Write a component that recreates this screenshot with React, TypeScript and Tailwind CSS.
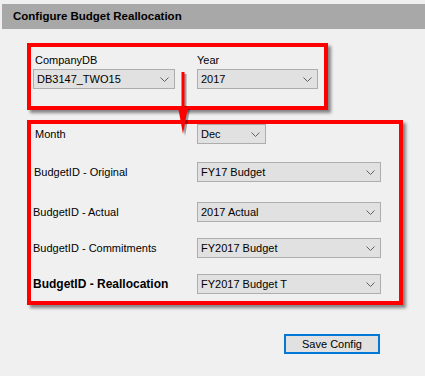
import React from 'react';

const Chevron = () => (
  <svg width="9" height="5" viewBox="0 0 9 5" className="shrink-0">
    <path d="M0.5 0.5 L4.5 4.5 L8.5 0.5" fill="none" stroke="#606060" strokeWidth="1" />
  </svg>
);

function Dropdown({ value, className }: { value: string; className: string }) {
  return (
    <div
      className={`flex h-[20px] items-center justify-between border border-[#adadad] bg-[#e1e1e1] pl-[3px] pr-[5px] text-[11px] text-black ${className}`}
    >
      <span className="leading-none">{value}</span>
      <Chevron />
    </div>
  );
}

function Row({ label, value, bold, narrow, className, labelClass }: { label: string; value: string; bold?: boolean; narrow?: boolean; className?: string; labelClass?: string }) {
  return (
    <div className={`flex h-[20px] items-center ${className ?? ''}`}>
      <span className={`w-[164px] shrink-0 ${bold ? 'text-[12px] font-bold' : 'text-[11px]'} text-black ${labelClass ?? ''}`}>{label}</span>
      <Dropdown value={value} className={narrow ? 'w-[69px]' : 'w-[184px]'} />
    </div>
  );
}

export default function App() {
  return (
    <div
      className="relative h-[376px] w-[425px] overflow-hidden bg-[#f0f0f0] pt-[4px]"
      style={{ fontFamily: '"Liberation Sans", Arial, sans-serif' }}
    >
      {/* Header */}
      <div className="ml-[2px] flex h-[25px] items-center bg-[#a8a8a8] pl-[11px]">
        <span className="text-[11.5px] font-bold text-black">Configure Budget Reallocation</span>
      </div>

      {/* Company / Year box */}
      <div className="ml-[27px] mt-[14px] h-[67px] w-[301px] border-4 border-[#ff0000] pl-[2px] pt-[6px] shadow-[3px_3px_3px_rgba(0,0,0,0.45)]">
        <div className="flex">
          <div className="flex flex-col">
            <span className="pl-[2px] text-[11px] leading-[14px] text-black">CompanyDB</span>
            <Dropdown value="DB3147_TWO15" className="mt-[2px] w-[142px]" />
          </div>
          <div className="ml-[22px] flex flex-col">
            <span className="text-[11px] leading-[14px] text-black">Year</span>
            <Dropdown value="2017" className="mt-[2px] w-[121px]" />
          </div>
        </div>
      </div>

      {/* Budget box */}
      <div className="ml-[27px] mt-[10px] flex h-[185px] w-[376px] flex-col border-4 border-[#ff0000] pl-[2px] shadow-[3px_3px_3px_rgba(0,0,0,0.45)]">
        <Row label="Month" value="Dec" narrow labelClass="pl-[2px]" />
        <Row label="BudgetID - Original" value="FY17 Budget" className="mt-[18px]" labelClass="pl-[1px]" />
        <Row label="BudgetID - Actual" value="2017 Actual" className="mt-[20px]" />
        <Row label="BudgetID - Commitments" value="FY2017 Budget" className="mt-[16px]" />
        <Row label="BudgetID - Reallocation" value="FY2017 Budget T" bold className="mt-[16px]" />
      </div>

      {/* Save button */}
      <div className="mr-[45px] mt-[29px] flex justify-end">
        <button className="flex h-[20px] w-[96px] items-center justify-center border-2 border-[#0078d7] bg-[#e1e1e1] text-[11px] text-black">
          Save Config
        </button>
      </div>

      {/* Arrow overlay */}
      <svg className="absolute left-[175px] top-[68px]" width="18" height="70" viewBox="0 0 18 70">
        <g opacity="0.35" transform="translate(2,2)">
          <rect x="6.5" y="4" width="3" height="38" fill="#000" />
          <polygon points="3,39 13,39 8,66" fill="#000" />
        </g>
        <rect x="6.5" y="4" width="3" height="38" fill="#ff0000" />
        <polygon points="3,39 13,39 8,66" fill="#ff0000" />
      </svg>
    </div>
  );
}
